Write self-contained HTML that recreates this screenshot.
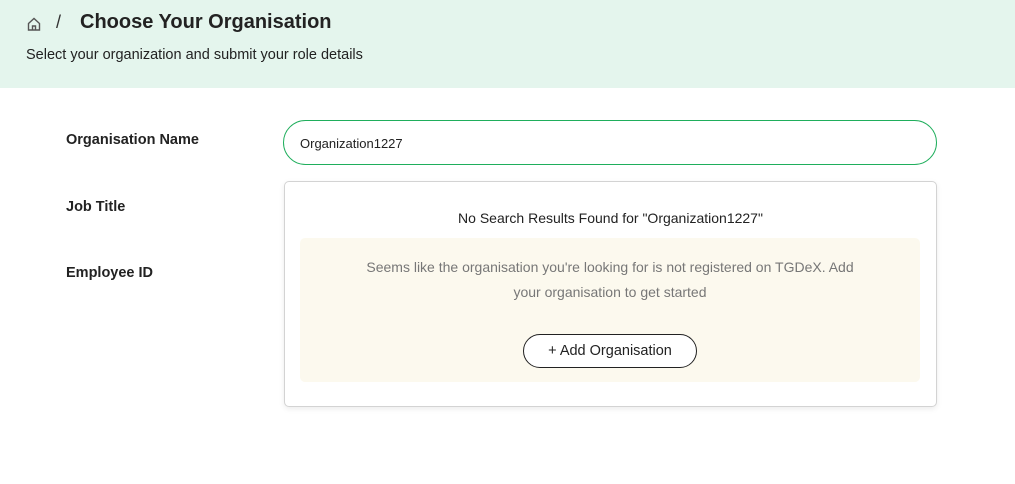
<!DOCTYPE html>
<html><head><style>
*{margin:0;padding:0;box-sizing:border-box}
body{width:1015px;height:484px;background:#fff;font-family:"Liberation Sans",sans-serif;color:#212529;position:relative;overflow:hidden}
.hdr{position:absolute;left:0;top:0;width:1015px;height:88px;background:#e4f5ed}
.abs{position:absolute;white-space:nowrap}
.lbl{font-size:14.5px;font-weight:bold;color:#222}
</style></head><body>
<div class="hdr"></div>
<svg class="abs" style="left:26px;top:16px" width="16" height="16" viewBox="0 0 16 16" fill="none" stroke="#555" stroke-width="1.4"><path d="M2.5 7.5L8 2.5l5.5 5V14h-11z"/><path d="M6.5 14V10h3v4"/></svg>
<div class="abs" style="left:56px;top:12px;font-size:18px;color:#333">/</div>
<div class="abs" style="left:80px;top:11px;font-size:20px;font-weight:bold;color:#222">Choose Your Organisation</div>
<div class="abs" style="left:26px;top:47px;font-size:14.5px;color:#222">Select your organization and submit your role details</div>
<div class="abs lbl" style="left:66px;top:132px">Organisation Name</div>
<div class="abs lbl" style="left:66px;top:199px">Job Title</div>
<div class="abs lbl" style="left:66px;top:265px">Employee ID</div>
<div class="abs" style="left:283px;top:120px;width:654px;height:45px;border:1.5px solid #1fae5c;border-radius:23px"></div>
<div class="abs" style="left:300px;top:136px;font-size:13px;color:#222">Organization1227</div>
<div class="abs" style="left:284px;top:181px;width:653px;height:226px;border:1px solid #d3d3d3;border-radius:5px;background:#fff;box-shadow:0 2px 6px rgba(0,0,0,.08)"></div>
<div class="abs" style="left:284px;top:210px;width:653px;text-align:center;font-size:14px;color:#222">No Search Results Found for "Organization1227"</div>
<div class="abs" style="left:300px;top:238px;width:620px;height:144px;background:#fcf9ee;border-radius:5px"></div>
<div class="abs" style="left:300px;top:255px;width:620px;text-align:center;font-size:14px;line-height:25px;color:#777;white-space:normal;padding:0 55px">Seems like the organisation you're looking for is not registered on TGDeX. Add your organisation to get started</div>
<div class="abs" style="left:523px;top:334px;width:174px;height:34px;border:1px solid #222;border-radius:17px;background:#fff;text-align:center;line-height:32px;font-size:14.5px;color:#222">+ Add Organisation</div>
</body></html>
